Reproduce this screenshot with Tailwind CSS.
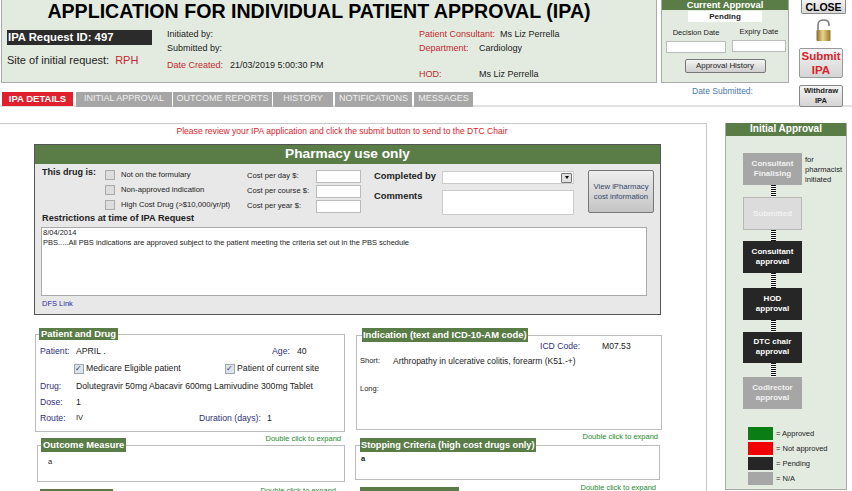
<!DOCTYPE html>
<html lang="en">
<head>
<meta charset="UTF-8">
<title>Application for Individual Patient Approval</title>
<script src="https://cdn.jsdelivr.net/npm/@tailwindcss/browser@4"></script>
</head>
<body class="w-[852px] h-[491px] overflow-hidden bg-white font-['Liberation_Sans',Arial,sans-serif] text-[9px] text-[#222]">

<!-- top area -->
<div class="flex h-[92px] items-start">
  <div class="ml-px w-[656px] h-[83px] bg-[#e3ebe0] border border-t-0 border-[#aaa] flex flex-col">
    <h1 class="h-[24px] pr-[20px] text-center text-[19.6px] leading-[22px] font-bold text-black">APPLICATION FOR INDIVIDUAL PATIENT APPROVAL (IPA)</h1>
    <div class="flex mt-[6px]">
      <div class="ml-[5px] w-[145px]">
        <div class="h-[15px] bg-[#2b2b2b] text-white font-bold text-[11.3px] leading-[15px] pl-px">IPA Request ID: 497</div>
        <div class="mt-[7px] text-[11px] leading-[16px]">Site of initial request: <span class="text-[#c4262e] ml-[3px]">RPH</span></div>
      </div>
      <div class="ml-[15px] w-[252px] -mt-[2px]">
        <div class="h-[13px] leading-[13px]">Initiated by:</div>
        <div class="h-[14px] leading-[14px]">Submitted by:</div>
        <div class="mt-[3px] h-[14px] leading-[14px]"><span class="text-[#c4262e]">Date Created:</span><span class="ml-[7px]">21/03/2019 5:00:30 PM</span></div>
      </div>
      <div class="-mt-[2px]">
        <div class="h-[13px] leading-[13px]"><span class="text-[#c4262e]">Patient Consultant:</span><span class="ml-[5px]">Ms Liz Perrella</span></div>
        <div class="h-[14px] leading-[14px] flex"><span class="text-[#c4262e] w-[60px]">Department:</span><span>Cardiology</span></div>
        <div class="mt-[12px] h-[14px] leading-[14px] flex"><span class="text-[#c4262e] w-[60px]">HOD:</span><span>Ms Liz Perrella</span></div>
      </div>
    </div>
  </div>

  <div class="ml-[4px] w-[128px]">
    <div class="h-[83px] bg-[#e3ebe0] border border-t-0 border-[#aaa] flex flex-col items-center">
      <div class="w-full h-[10px] bg-[#5a7d48] text-white font-bold text-[9.4px] leading-[10px] text-center whitespace-nowrap">Current Approval</div>
      <div class="w-[74px] h-[11px] bg-white text-center font-bold text-[8px] leading-[11px] mt-px">Pending</div>
      <div class="w-full flex mt-[6px] text-[7.5px] leading-[10px] text-center">
        <div class="ml-[4px] w-[60px]">Decision Date
          <div class="mt-[3px] h-[12px] bg-white border border-[#bbb]"></div>
        </div>
        <div class="ml-[6px] w-[54px] -mt-px">Expiry Date
          <div class="mt-[3px] h-[12px] bg-white border border-[#bbb]"></div>
        </div>
      </div>
      <button class="mt-[6px] w-[81px] h-[14px] rounded-[2px] border border-[#777] bg-gradient-to-b from-[#f5f5f5] to-[#cfcfcf] text-[7.9px] leading-[12px] text-[#222]">Approval History</button>
    </div>
    <div class="mt-[3px] pl-[31px] text-[#4a78a8] text-[8.5px] leading-[11px] whitespace-nowrap">Date Submitted:</div>
  </div>

  <div class="ml-[10px] w-[48px] flex flex-col items-start">
    <button class="ml-[2px] w-[45px] h-[14px] rounded-b-[2px] border border-t-0 border-[#888] bg-gradient-to-b from-[#f2f2f2] to-[#d8d8d8] text-[10.5px] leading-[12px] font-bold text-black">CLOSE</button>
    <svg class="ml-[17px] mt-[5px]" width="15" height="22" viewBox="0 0 15 22">
      <defs>
        <linearGradient id="gold" x1="0" x2="1" y1="0" y2="0">
          <stop offset="0" stop-color="#8a6a24"/>
          <stop offset="0.45" stop-color="#ecd48c"/>
          <stop offset="1" stop-color="#96742c"/>
        </linearGradient>
      </defs>
      <path d="M2 11 V6 C2 2.5 4.5 1 7.5 1 C10.5 1 13 2.5 13 5.5 V7" fill="none" stroke="#7f7f7f" stroke-width="1.6"/>
      <rect x="0.5" y="11" width="14" height="11" rx="1" fill="url(#gold)"/>
    </svg>
    <button class="mt-[7px] w-[44px] h-[30px] rounded-[2px] border border-[#999] bg-gradient-to-b from-[#f4f4f4] to-[#d4d4d4] text-[11.5px] leading-[14px] font-bold text-[#d8232a]">Submit<br>IPA</button>
    <button class="mt-[7px] w-[44px] h-[22px] rounded-[2px] border border-[#888] bg-gradient-to-b from-[#f4f4f4] to-[#d4d4d4] text-[7.6px] leading-[10px] font-bold text-[#222]">Withdraw<br>IPA</button>
  </div>
</div>

<!-- tabs -->
<div class="h-[15px] flex items-start border-b-2 border-[#e2e2e2] text-[9px] leading-[12px] text-center text-[#f0f0f0] whitespace-nowrap">
  <div class="ml-[2px] w-[71px] h-[14px] bg-[#e0202c] font-bold text-[9.5px] leading-[14px] text-white">IPA DETAILS</div>
  <div class="ml-[3px] w-[96px] h-[15px] bg-[#a6a6a6]">INITIAL APPROVAL</div>
  <div class="ml-px w-[99px] h-[15px] bg-[#a6a6a6]">OUTCOME REPORTS</div>
  <div class="ml-px w-[60px] h-[15px] bg-[#a6a6a6]">HISTORY</div>
  <div class="ml-[2px] w-[77px] h-[15px] bg-[#a6a6a6]">NOTIFICATIONS</div>
  <div class="ml-[2px] w-[59px] h-[15px] bg-[#a6a6a6]">MESSAGES</div>
</div>

<!-- body -->
<div class="flex mt-[16px] h-[368px]">
  <div class="w-[707px] h-full overflow-hidden border-t border-r border-[#c8c8c8] pl-[34px]">
    <p class="h-[20px] pt-[2px] pr-[56px] text-center text-[8.55px] leading-[11px] text-[#d8232a] whitespace-nowrap">Please review your IPA application and click the submit button to send to the DTC Chair</p>

    <!-- pharmacy -->
    <section class="w-[627px] h-[171px] bg-[#e8e8e8] border border-[#555]">
      <h2 class="h-[19px] bg-[#5a7d48] text-white font-bold text-[13.7px] leading-[18px] text-center">Pharmacy use only</h2>
      <div class="flex h-[42px] mt-[6px] whitespace-nowrap">
        <div class="ml-[7px] w-[63px] -mt-[3px] font-bold text-[9px] leading-[10px]">This drug is:</div>
        <div class="w-[142px] -mt-[3px] text-[7.7px]">
          <label class="flex items-center h-[15px]"><span class="w-[10px] h-[10px] bg-[#ddd] border border-[#aaa]"></span><span class="ml-[6px]">Not on the formulary</span></label>
          <label class="flex items-center h-[15px]"><span class="w-[10px] h-[10px] bg-[#ddd] border border-[#aaa]"></span><span class="ml-[6px]">Non-approved indication</span></label>
          <label class="flex items-center h-[15px]"><span class="w-[10px] h-[10px] bg-[#ddd] border border-[#aaa]"></span><span class="ml-[6px]">High Cost Drug (&gt;$10,000/yr/pt)</span></label>
        </div>
        <div class="w-[69px] -mt-[2px] text-[7.6px] leading-[15px]">
          <div class="h-[15px]">Cost per day $:</div>
          <div class="h-[15px]">Cost per course $:</div>
          <div class="h-[15px]">Cost per year $:</div>
        </div>
        <div class="w-[45px]">
          <div class="h-[13px] bg-white border border-[#bbb]"></div>
          <div class="h-[13px] mt-[2px] bg-white border border-[#bbb]"></div>
          <div class="h-[13px] mt-[2px] bg-white border border-[#bbb]"></div>
        </div>
        <div class="ml-[13px] w-[68px] -mt-px font-bold text-[9.4px]">
          <div class="h-[20px] leading-[14px]">Completed by</div>
          <div class="leading-[14px]">Comments</div>
        </div>
        <div class="w-[132px]">
          <div class="mt-px h-[13px] pr-px bg-white border border-[#ccc] flex justify-end items-center">
            <span class="w-[11px] h-[10px] bg-[#e0e0e0] border border-[#777] rounded-[1px] flex items-center justify-center"><span class="border-x-[2.5px] border-x-transparent border-t-[3px] border-t-black"></span></span>
          </div>
          <div class="mt-[6px] h-[25px] bg-white border border-[#ccc]"></div>
        </div>
        <button class="ml-[14px] w-[66px] h-[43px] shrink-0 rounded-[2px] border border-[#777] bg-gradient-to-b from-[#eeeeee] to-[#c4c4c4] text-[#33476b] text-[7.7px] leading-[10px]">View iPharmacy<br>cost information</button>
      </div>
      <h3 class="ml-[7px] font-bold text-[9.2px] leading-[13px] h-[13px]">Restrictions at time of IPA Request</h3>
      <div class="ml-[6px] mt-[2px] w-[606px] h-[69px] bg-white border border-[#aaa] px-px text-[7.5px] leading-[10px]">8/04/2014<br>PBS.....All PBS indications are approved subject to the patient meeting the criteria set out in the PBS schedule</div>
      <a class="block ml-[7px] mt-[3px] text-[7.5px] leading-[10px] text-[#2a2aa8]">DFS Link</a>
    </section>

    <!-- forms -->
    <div class="flex mt-[13px]">
      <div class="w-[312px] pl-px">
        <fieldset class="w-[310px] h-[104px] border border-[#bbb] pl-[4px] text-[8.7px] whitespace-nowrap">
          <legend class="-ml-px px-[2px] bg-[#5a7d48] text-white font-bold text-[9.4px] leading-[12px]">Patient and Drug</legend>
          <div class="flex h-[18px] mt-[2px] leading-[18px]"><span class="w-[36px] text-[#30307a]">Patient:</span><span class="w-[196px]">APRIL .</span><span class="w-[25px] text-[#30307a]">Age:</span><span>40</span></div>
          <div class="flex h-[18px] items-center pl-[34px]">
            <span class="w-[10px] h-[10px] bg-[#dde3ee] border border-[#9aa] text-[8px] leading-[8px] text-[#335]">✓</span><span class="ml-[2px] w-[139px]">Medicare Eligible patient</span>
            <span class="w-[10px] h-[10px] bg-[#dde3ee] border border-[#9aa] text-[8px] leading-[8px] text-[#335]">✓</span><span class="ml-[2px]">Patient of current site</span>
          </div>
          <div class="flex h-[16px] leading-[16px]"><span class="w-[36px] text-[#30307a]">Drug:</span><span>Dolutegravir 50mg Abacavir 600mg Lamivudine 300mg Tablet</span></div>
          <div class="flex h-[16px] leading-[16px]"><span class="w-[36px] text-[#30307a]">Dose:</span><span>1</span></div>
          <div class="flex h-[16px] leading-[16px]"><span class="w-[36px] text-[#30307a]">Route:</span><span class="w-[123px] text-[7.5px]">IV</span><span class="w-[68px] text-[#30307a]">Duration (days):</span><span>1</span></div>
        </fieldset>
        <p class="mt-[2px] pr-[5px] text-right text-[#1e8a2e] text-[7.5px] leading-[9px] h-[9px]">Double click to expand</p>
        <fieldset class="ml-[2px] -mt-[5px] w-[308px] h-[44px] border border-[#bbb] pl-[10px] text-[7.5px]">
          <legend class="-ml-[7px] px-[2px] bg-[#5a7d48] text-white font-bold text-[9.4px] leading-[14px]">Outcome Measure</legend>
          <p class="mt-[4px]">a</p>
        </fieldset>
        <p class="mt-[4px] pr-[10px] text-right text-[#1e8a2e] text-[7.5px] leading-[9px] h-[9px]">Double click to expand</p>
        <fieldset class="ml-px -mt-[6px] w-[309px] h-[30px] border border-[#bbb] pl-[3px]">
          <legend class="w-[73px] h-[14px] bg-[#5a7d48]"></legend>
        </fieldset>
      </div>
      <div class="ml-[9px] w-[306px]">
        <fieldset class="ml-px w-[306px] h-[102px] border border-[#bbb]">
          <legend class="ml-[5px] px-px bg-[#5a7d48] text-white font-bold text-[9.4px] leading-[14px]">Indication (text and ICD-10-AM code)</legend>
          <div class="h-[11px] leading-[11px] pl-[183px] text-[8.6px] -mt-px"><span class="text-[#30307a] w-[62px] inline-block">ICD Code:</span><span>M07.53</span></div>
          <div class="flex mt-[3px] h-[27px] pl-[3px] leading-[12px] text-[7.5px]"><span class="w-[33px]">Short:</span><span class="text-[8.5px]">Arthropathy in ulcerative colitis, forearm (K51.-+)</span></div>
          <div class="pl-[3px] mt-[2px] text-[7.5px] leading-[10px]">Long:</div>
        </fieldset>
        <p class="mt-[2px] pr-[3px] text-right text-[#1e8a2e] text-[7.5px] leading-[9px] h-[9px]">Double click to expand</p>
        <fieldset class="-mt-[3px] w-[305px] h-[42px] border border-[#bbb] pl-[5px] text-[7.5px] font-bold">
          <legend class="-ml-px px-px bg-[#5a7d48] text-white font-bold text-[9.2px] leading-[14px]">Stopping Criteria (high cost drugs only)</legend>
          <p class="mt-[1px]">a</p>
        </fieldset>
        <p class="mt-[3px] pr-[5px] text-right text-[#1e8a2e] text-[7.5px] leading-[9px] h-[9px]">Double click to expand</p>
        <fieldset class="-mt-[5px] w-[305px] h-[30px] border border-[#bbb] pl-[4px]">
          <legend class="w-[99px] h-[14px] bg-[#5a7d48]"></legend>
        </fieldset>
      </div>
    </div>
  </div>

  <!-- workflow -->
  <aside class="ml-[18px] w-[122px] h-[367px] bg-[#e3ebe0] border border-t-0 border-[#aaa] flex flex-col">
    <h2 class="h-[13px] bg-[#5a7d48] text-white font-bold text-[10px] leading-[12px] text-center">Initial Approval</h2>
    <div class="ml-[17px] mt-[17px] flex">
      <div class="w-[59px] h-[32px] bg-[#a6a6a6] text-[#f2f2f2] font-bold text-[8px] leading-[10px] text-center pt-[6px]">Consultant<br>Finalising</div>
      <div class="ml-[3px] text-[7.6px] leading-[10px] pt-[2px]">for<br>pharmacist<br>initiated</div>
    </div>
    <div class="ml-[45px] w-[5px] h-[12px] bg-[repeating-linear-gradient(#111_0_1px,#fff_1px_2px)]"></div>
    <div class="ml-[17px] w-[59px] h-[33px] bg-[#dcdcdc] border border-[#b8b8b8] text-[#f2f2f2] font-bold text-[8px] leading-[31px] text-center">Submitted</div>
    <div class="ml-[45px] w-[5px] h-[11px] bg-[repeating-linear-gradient(#111_0_1px,#fff_1px_2px)]"></div>
    <div class="ml-[17px] w-[59px] h-[32px] bg-[#262626] text-white font-bold text-[8px] leading-[10px] text-center pt-[6px]">Consultant<br>approval</div>
    <div class="ml-[45px] w-[5px] h-[15px] bg-[repeating-linear-gradient(#111_0_1px,#fff_1px_2px)]"></div>
    <div class="ml-[17px] w-[59px] h-[32px] bg-[#262626] text-white font-bold text-[8px] leading-[10px] text-center pt-[6px]">HOD<br>approval</div>
    <div class="ml-[45px] w-[5px] h-[12px] bg-[repeating-linear-gradient(#111_0_1px,#fff_1px_2px)]"></div>
    <div class="ml-[17px] w-[59px] h-[31px] bg-[#262626] text-white font-bold text-[8px] leading-[10px] text-center pt-[5px]">DTC chair<br>approval</div>
    <div class="ml-[45px] w-[5px] h-[14px] bg-[repeating-linear-gradient(#111_0_1px,#fff_1px_2px)]"></div>
    <div class="ml-[17px] w-[59px] h-[32px] bg-[#a6a6a6] text-[#f2f2f2] font-bold text-[8px] leading-[10px] text-center pt-[6px]">Codirector<br>approval</div>
    <div class="ml-[22px] mt-[18px] flex flex-col gap-[1px] text-[7.5px] leading-[13px]">
      <div class="flex h-[14px]"><span class="w-[25px] h-[13px] bg-[#0a7d14]"></span><span class="ml-[3px]">= Approved</span></div>
      <div class="flex h-[14px]"><span class="w-[25px] h-[13px] bg-[#f00000]"></span><span class="ml-[3px]">= Not approved</span></div>
      <div class="flex h-[14px]"><span class="w-[25px] h-[13px] bg-[#262626]"></span><span class="ml-[3px]">= Pending</span></div>
      <div class="flex h-[14px]"><span class="w-[25px] h-[13px] bg-[#a6a6a6]"></span><span class="ml-[3px]">= N/A</span></div>
    </div>
  </aside>
</div>
</body>
</html>
